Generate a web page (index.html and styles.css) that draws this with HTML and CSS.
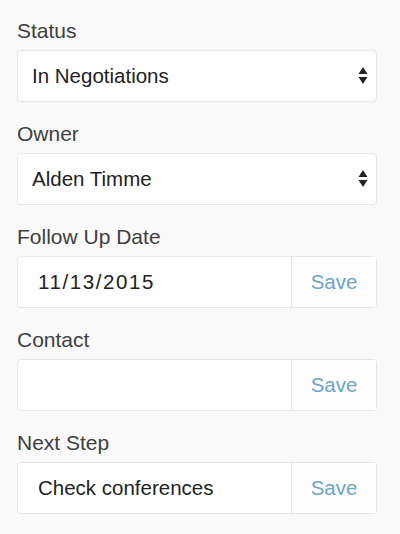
FILE: index.html
```html
<!DOCTYPE html>
<html>
<head>
<meta charset="utf-8">
<link rel="stylesheet" href="styles.css">
</head>
<body>
<form class="panel">
  <div class="field">
    <label class="label">Status</label>
    <div class="box select">
      <span class="value">In Negotiations</span>
      <svg class="arrows" width="10" height="20" viewBox="0 0 10 20"><path d="M5 1 L9.5 8 L0.5 8 Z M0.5 11 L9.5 11 L5 18 Z" fill="#222"/></svg>
    </div>
  </div>
  <div class="field">
    <label class="label">Owner</label>
    <div class="box select">
      <span class="value">Alden Timme</span>
      <svg class="arrows" width="10" height="20" viewBox="0 0 10 20"><path d="M5 1 L9.5 8 L0.5 8 Z M0.5 11 L9.5 11 L5 18 Z" fill="#222"/></svg>
    </div>
  </div>
  <div class="field">
    <label class="label">Follow Up Date</label>
    <div class="box group">
      <span class="input date">11/13/2015</span>
      <span class="save">Save</span>
    </div>
  </div>
  <div class="field">
    <label class="label">Contact</label>
    <div class="box group">
      <span class="input"></span>
      <span class="save">Save</span>
    </div>
  </div>
  <div class="field">
    <label class="label">Next Step</label>
    <div class="box group">
      <span class="input">Check conferences</span>
      <span class="save">Save</span>
    </div>
  </div>
</form>
</body>
</html>
```
FILE: styles.css
```css
html, body {
  margin: 0;
  padding: 0;
  background: #f9f9f9;
}
body {
  font-family: "Liberation Sans", Arial, sans-serif;
  color: #333;
  width: 400px;
  height: 534px;
  overflow: hidden;
}
.panel {
  padding: 20px 23px 0 17px;
  display: flex;
  flex-direction: column;
  gap: 21px;
}
.field {
  display: flex;
  flex-direction: column;
  gap: 8px;
}
.label {
  font-size: 21px;
  line-height: 22px;
  color: #3f3f3f;
}
.box {
  height: 50px;
  background: #fff;
  border: 1px solid #e6e6e6;
  border-radius: 4px;
  display: flex;
  align-items: center;
  box-sizing: content-box;
}
.select {
  padding: 0 6px 0 14px;
  justify-content: space-between;
}
.value {
  font-size: 20.5px;
  color: #222;
}
.arrows {
  margin-right: 2px;
}
.group {
  align-items: stretch;
}
.input {
  flex: 1;
  display: flex;
  align-items: center;
  padding-left: 20px;
  font-size: 20.5px;
  color: #222;
}
.date {
  letter-spacing: 1.6px;
}
.save {
  width: 84px;
  border-left: 1px solid #e6e6e6;
  display: flex;
  align-items: center;
  justify-content: center;
  font-size: 20.5px;
  color: #6fa3cb;
  background: #fdfdfd;
}
```
